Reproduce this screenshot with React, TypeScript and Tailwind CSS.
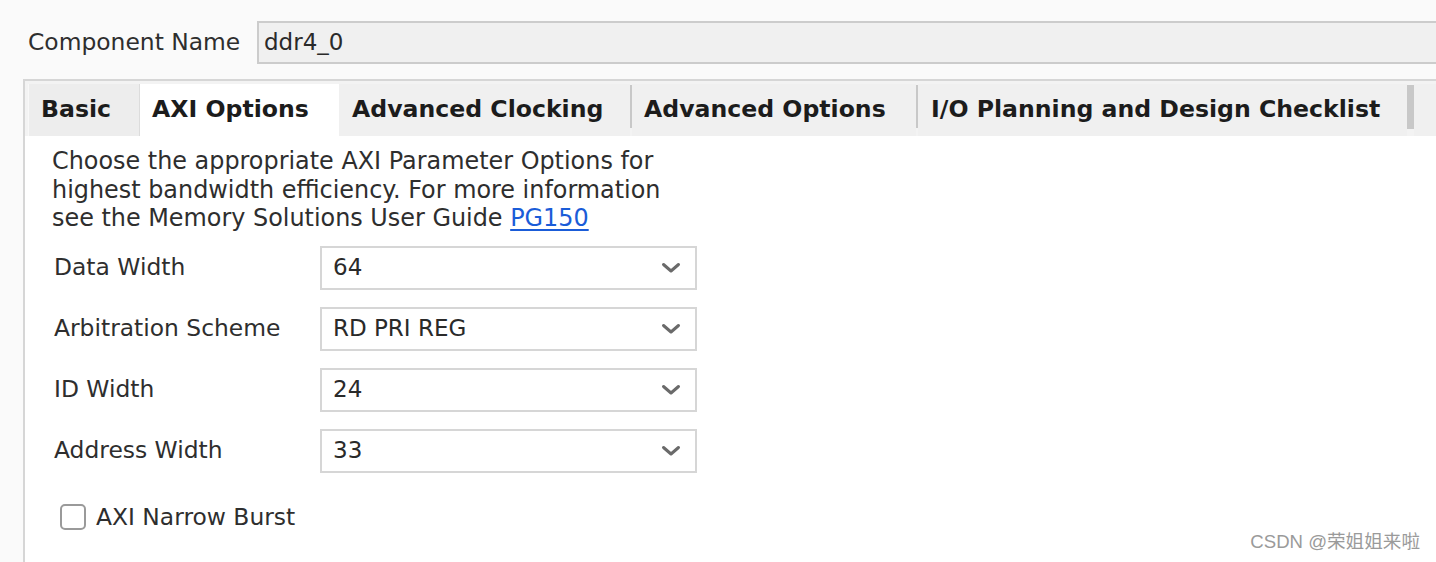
import React from "react";

const Chevron = () => (
  <svg width="20" height="12" viewBox="0 0 20 12" className="shrink-0">
    <polyline points="2.5,2.5 10,9 17.5,2.5" fill="none" stroke="#6a6a6a" strokeWidth="3" strokeLinecap="round" strokeLinejoin="round" />
  </svg>
);

const Select = ({ value }: { value: string }) => (
  <div className="w-[377px] h-[44px] bg-white border-2 border-[#d6d6d6] flex items-center justify-between pl-[11px] pr-[14px] text-[23px] text-[#2a2a2a]">
    <span>{value}</span>
    <Chevron />
  </div>
);

const Row = ({ label, value }: { label: string; value: string }) => (
  <div className="flex items-center h-[44px]">
    <div className="w-[268px] pl-[2px] text-[23.4px] text-[#2e2e2e]">{label}</div>
    <Select value={value} />
  </div>
);

export default function App() {
  return (
    <div className="w-[1436px] h-[562px] bg-[#fafafa] overflow-hidden relative font-['DejaVu_Sans',sans-serif]">
      <div className="flex items-center pt-[21px] pl-[28px]">
        <div className="w-[229px] text-[23.4px] text-[#2e2e2e] pt-[1px]">Component Name</div>
        <div className="flex-1 -mr-[10px] h-[43px] bg-[#f0f0f0] border-2 border-[#cccccc] flex items-center pl-[5px] text-[23px] text-[#2a2a2a]">
          ddr4_0
        </div>
      </div>
      <div className="mt-[15px] ml-[23px] border-l-2 border-t-2 border-[#d6d6d6] h-[500px] flex flex-col">
        <div className="h-[55px] bg-[#f3f3f3] pt-[3px] pl-[3px] flex items-stretch text-[23.6px] font-bold text-[#1c1c1c] whitespace-nowrap">
          <div className="w-[111px] bg-[#ededed] border-l border-[#f8f8f8] pl-[12px] flex items-center">Basic</div>
          <div className="w-[1px] bg-[#dcdcdc]" />
          <div className="w-[199px] bg-white pl-[12px] flex items-center">AXI Options</div>
          <div className="w-[291px] bg-[#f0f0f0] pl-[13px] flex items-center">Advanced Clocking</div>
          <div className="w-[2px] bg-[#c8c8c8] my-[1px] mb-[8px]" />
          <div className="w-[284px] bg-[#f0f0f0] pl-[12px] flex items-center">Advanced Options</div>
          <div className="w-[2px] bg-[#c8c8c8] my-[1px] mb-[8px]" />
          <div className="w-[489px] bg-[#f0f0f0] pl-[13px] flex items-center">I/O Planning and Design Checklist</div>
          <div className="w-[7px] bg-[#c8c8c8] my-[1px] mb-[7px]" />
          <div className="flex-1 bg-[#f0f0f0]" />
        </div>
        <div className="flex-1 bg-white pl-[27px] pt-[11px]">
          <div className="text-[23.9px] leading-[28.5px] text-[#2e2e2e]">
            <div>Choose the appropriate AXI Parameter Options for</div>
            <div>highest bandwidth efficiency. For more information</div>
            <div>
              see the Memory Solutions User Guide{" "}
              <span className="text-[#1a5cd8] underline underline-offset-[3px]">PG150</span>
            </div>
          </div>
          <div className="mt-[13px] flex flex-col gap-[17px]">
            <Row label="Data Width" value="64" />
            <Row label="Arbitration Scheme" value="RD PRI REG" />
            <Row label="ID Width" value="24" />
            <Row label="Address Width" value="33" />
          </div>
          <div className="mt-[27px] ml-[8px] flex items-center gap-[10px]">
            <div className="w-[26px] h-[26px] border-2 border-[#9a9a9a] rounded-[5px] bg-white" />
            <div className="text-[23.4px] text-[#2e2e2e]">AXI Narrow Burst</div>
          </div>
        </div>
      </div>
      <div className="absolute right-[16px] bottom-[6px] text-[18.6px] text-[#9a9a9a] font-['Liberation_Sans','Noto_Sans_CJK_SC',sans-serif]">
        CSDN @荣姐姐来啦
      </div>
    </div>
  );
}
